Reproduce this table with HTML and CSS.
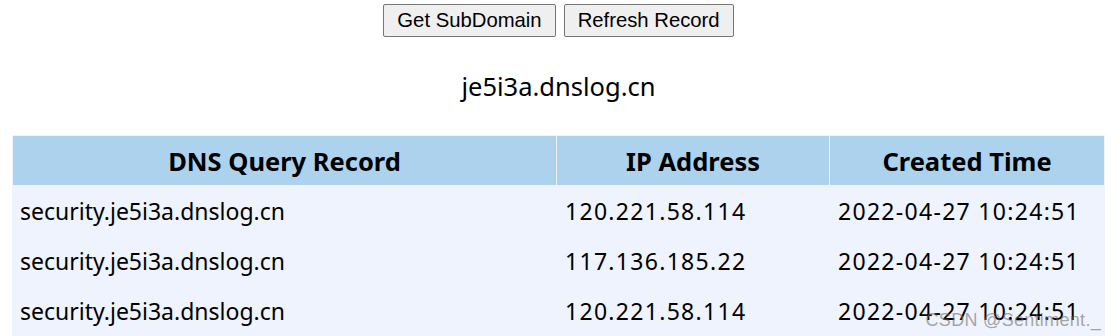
FILE: index.html
```html
<!DOCTYPE html>
<html lang="en">
<head>
  <meta charset="UTF-8" />
  <title>DNSLog</title>
  <link rel="stylesheet" href="styles.css">
</head>
<body>
  <div class="actions">
    <button type="button">Get SubDomain</button>
    <button type="button">Refresh Record</button>
  </div>

  <p class="domain">je5i3a.dnslog.cn</p>

  <table class="records">
    <colgroup>
      <col class="col-query">
      <col class="col-ip">
      <col class="col-time">
    </colgroup>
    <thead>
      <tr>
        <th>DNS Query Record</th>
        <th>IP Address</th>
        <th>Created Time</th>
      </tr>
    </thead>
    <tbody>
      <tr>
        <td>security.je5i3a.dnslog.cn</td>
        <td class="num">120.221.58.114</td>
        <td class="num">2022-04-27 10:24:51</td>
      </tr>
      <tr>
        <td>security.je5i3a.dnslog.cn</td>
        <td class="num">117.136.185.22</td>
        <td class="num">2022-04-27 10:24:51</td>
      </tr>
      <tr>
        <td>security.je5i3a.dnslog.cn</td>
        <td class="num">120.221.58.114</td>
        <td class="num">2022-04-27 10:24:51</td>
      </tr>
    </tbody>
  </table>

  <span class="watermark">CSDN @Sentiment._</span>
</body>
</html>
```

FILE: styles.css
```css
* {
  box-sizing: border-box;
}
body {
  margin: 0;
  padding: 0;
  background: #fff;
  color: #000;
  font-family: "Noto Sans", "Open Sans", sans-serif;
  position: relative;
  height: 336px;
  overflow: hidden;
}
.actions {
  display: flex;
  justify-content: center;
  gap: 8px;
  padding-top: 4px;
}
.actions button {
  font-family: "Liberation Sans", Arial, sans-serif;
  font-size: 20.3px;
  height: 33px;
  padding: 0 13px;
  background: #efefef;
  border: 1px solid #767676;
  border-radius: 2px;
  color: #000;
}
.domain {
  margin: 33px 0 0;
  text-align: center;
  font-size: 25.5px;
  line-height: 32px;
}
.records {
  width: 1093px;
  margin: 33px 0 0 12px;
  border-spacing: 1px;
  background: #eef3fd;
  font-size: 23px;
  table-layout: fixed;
}
.col-query {
  width: 543px;
}
.col-ip {
  width: 272px;
}
.col-time {
  width: 274px;
}
.records th {
  background: #acd2ed;
  height: 49px;
  font-weight: bold;
  font-size: 25.5px;
  padding: 0;
}
.records td {
  height: 49px;
  padding: 0 7px;
  text-align: left;
  white-space: nowrap;
}
.records td.num {
  padding-left: 8px;
  letter-spacing: 1.3px;
}
.watermark {
  position: absolute;
  right: 16px;
  bottom: 5px;
  font-family: "Liberation Sans", Arial, sans-serif;
  font-size: 18px;
  color: rgba(110, 110, 110, 0.6);
  letter-spacing: 0.3px;
}
```
